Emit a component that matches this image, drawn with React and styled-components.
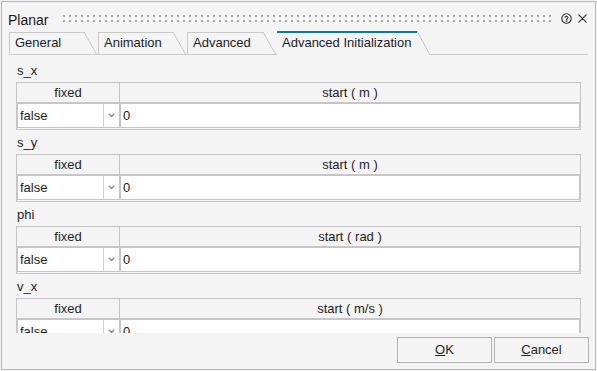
import React from "react";
import styled, { createGlobalStyle } from "styled-components";

const GlobalStyle = createGlobalStyle`
  html, body {
    margin: 0;
    background: #f4f4f4;
  }
  body {
    font-family: "Liberation Sans", Arial, sans-serif;
    font-size: 13px;
    color: #1e1e1e;
  }
`;

const tabs = [
  { label: "General", w: 75 },
  { label: "Animation", w: 75 },
  { label: "Advanced", w: 76 },
  { label: "Advanced Initialization", w: 140, active: true },
];

const vars = [
  { name: "s_x", unit: "m" },
  { name: "s_y", unit: "m" },
  { name: "phi", unit: "rad" },
  { name: "v_x", unit: "m/s" },
];

const HelpIcon = () => (
  <svg width="11" height="11" viewBox="0 0 11 11" fill="none" stroke="#333" strokeWidth="1.1" strokeLinecap="round">
    <circle cx="5.5" cy="5.5" r="4.7" />
    <path d="M4 4.3a1.55 1.55 0 0 1 3 .5c0 1-1.5 1.3-1.5 1.9" />
    <circle cx="5.5" cy="8.1" r="0.35" fill="#333" />
  </svg>
);

const CloseIcon = () => (
  <svg width="9" height="9" viewBox="0 0 9 9" stroke="#333" strokeWidth="1.2" strokeLinecap="round">
    <path d="M0.8 0.8L8.2 8.2M8.2 0.8L0.8 8.2" />
  </svg>
);

const ChevronDown = () => (
  <svg width="7" height="5" viewBox="0 0 7 5" fill="none" stroke="#8d8d8d" strokeWidth="1.4">
    <path d="M0.8 0.8L3.5 3.6L6.2 0.8" />
  </svg>
);

const GripDots = () => (
  <svg width="100%" height="7">
    <defs>
      <pattern id="grip" width="6" height="5" patternUnits="userSpaceOnUse">
        <rect width="2" height="2" fill="#a8a8a8" />
      </pattern>
    </defs>
    <rect width="100%" height="7" fill="url(#grip)" />
  </svg>
);

const App = () => {
  return (
    <>
      <GlobalStyle />
      <Window>
        <TitleBar>
          <Title>Planar</Title>
          <Grip>
            <GripDots />
          </Grip>
          <TitleIcons>
            <HelpIcon />
            <CloseIcon />
          </TitleIcons>
        </TitleBar>

        <TabRow>
          {tabs.map((t) => (
            <Tab key={t.label} $w={t.w} $active={t.active}>
              {t.label}
            </Tab>
          ))}
        </TabRow>

        <Content>
          {vars.map((v) => (
            <Section key={v.name}>
              <Label>{v.name}</Label>
              <Grid>
                <HeadCell $first>fixed</HeadCell>
                <HeadCell>start ( {v.unit} )</HeadCell>
                <SelectBox>
                  <SelText>false</SelText>
                  <Arrow>
                    <ChevronDown />
                  </Arrow>
                </SelectBox>
                <InputBox>0</InputBox>
              </Grid>
            </Section>
          ))}
        </Content>

        <ButtonBar>
          <Button>
            <u>O</u>K
          </Button>
          <Button>
            <u>C</u>ancel
          </Button>
        </ButtonBar>
      </Window>
    </>
  );
};

export default App;

const Window = styled.div`
  margin: 1px 0 0 1px;
  width: 595px;
  height: 369px;
  box-sizing: border-box;
  border: 1px solid #b6b6b6;
  background: #f4f4f4;
  display: flex;
  flex-direction: column;
  overflow: hidden;
`;

const TitleBar = styled.div`
  height: 29px;
  box-sizing: border-box;
  padding: 10px 8px 0 6px;
  display: flex;
  align-items: flex-start;
`;

const Title = styled.div`
  font-size: 14px;
  line-height: 16px;
  color: #1a1a1a;
`;

const Grip = styled.div`
  flex: 1;
  height: 7px;
  margin: 3px 9px 0 15px;
  display: flex;
`;

const TitleIcons = styled.div`
  height: 12px;
  display: flex;
  align-items: center;
  gap: 6px;
`;

const TabRow = styled.div`
  height: 24px;
  box-sizing: border-box;
  margin: 0 7px;
  border-bottom: 1px solid #cdcdcd;
  display: flex;
  align-items: flex-end;
`;

const Tab = styled.div`
  position: relative;
  box-sizing: border-box;
  width: ${(p) => p.$w}px;
  height: ${(p) => (p.$active ? 24 : 22)}px;
  margin-right: 14px;
  margin-bottom: ${(p) => (p.$active ? -1 : 0)}px;
  padding-left: 5px;
  border-top: ${(p) => (p.$active ? "2px solid #0f77a6" : "1px solid #c9c9c9")};
  border-left: ${(p) => (p.$active ? "none" : "1px solid #c9c9c9")};
  background: #f4f4f4;
  line-height: 20px;
  color: #1c1c28;
  white-space: nowrap;
  z-index: ${(p) => (p.$active ? 1 : 0)};

  &::after {
    content: "";
    position: absolute;
    left: 100%;
    top: ${(p) => (p.$active ? -2 : -1)}px;
    bottom: ${(p) => (p.$active ? 0 : -1)}px;
    width: 13px;
    background: linear-gradient(
        to top right,
        transparent calc(50% - 0.8px),
        #c4c4c4 50%,
        transparent calc(50% + 0.8px)
      ),
      ${(p) => (p.$active ? "#f4f4f4" : "transparent")};
  }
`;

const Content = styled.div`
  flex: 1;
  min-height: 0;
  overflow: hidden;
  padding: 7px 0 0 14px;
`;

const Section = styled.div`
  margin-bottom: 4px;
`;

const Label = styled.div`
  line-height: 18px;
  padding-left: 1px;
  margin-bottom: 2px;
`;

const Grid = styled.div`
  width: 565px;
  box-sizing: border-box;
  border: 1px solid #c6c6c6;
  padding-bottom: 1px;
  display: grid;
  grid-template-columns: 103px 1fr;
`;

const HeadCell = styled.div`
  height: 20px;
  box-sizing: border-box;
  border-bottom: 1px solid #c6c6c6;
  border-right: ${(p) => (p.$first ? "1px solid #c6c6c6" : "none")};
  text-align: center;
  line-height: 19px;
`;

const SelectBox = styled.div`
  height: 25px;
  box-sizing: border-box;
  border: 1px solid #c6c6c6;
  background: #fff;
  display: flex;
`;

const SelText = styled.div`
  flex: 1;
  padding-left: 2px;
  line-height: 23px;
`;

const Arrow = styled.div`
  width: 16px;
  box-sizing: border-box;
  border-left: 1px solid #d2d2d2;
  display: flex;
  align-items: center;
  justify-content: center;
`;

const InputBox = styled.div`
  height: 25px;
  box-sizing: border-box;
  border: 1px solid #c6c6c6;
  background: #fff;
  padding-left: 2px;
  line-height: 23px;
`;

const ButtonBar = styled.div`
  height: 36px;
  box-sizing: border-box;
  padding: 4px 6px 0 0;
  display: flex;
  justify-content: flex-end;
  gap: 2px;
`;

const Button = styled.button`
  width: 95px;
  height: 26px;
  box-sizing: border-box;
  padding: 0;
  border: 1px solid #b3b3b3;
  border-radius: 0;
  background: #f5f5f5;
  font-family: inherit;
  font-size: 13px;
  color: #1e1e1e;
  line-height: 24px;
`;
